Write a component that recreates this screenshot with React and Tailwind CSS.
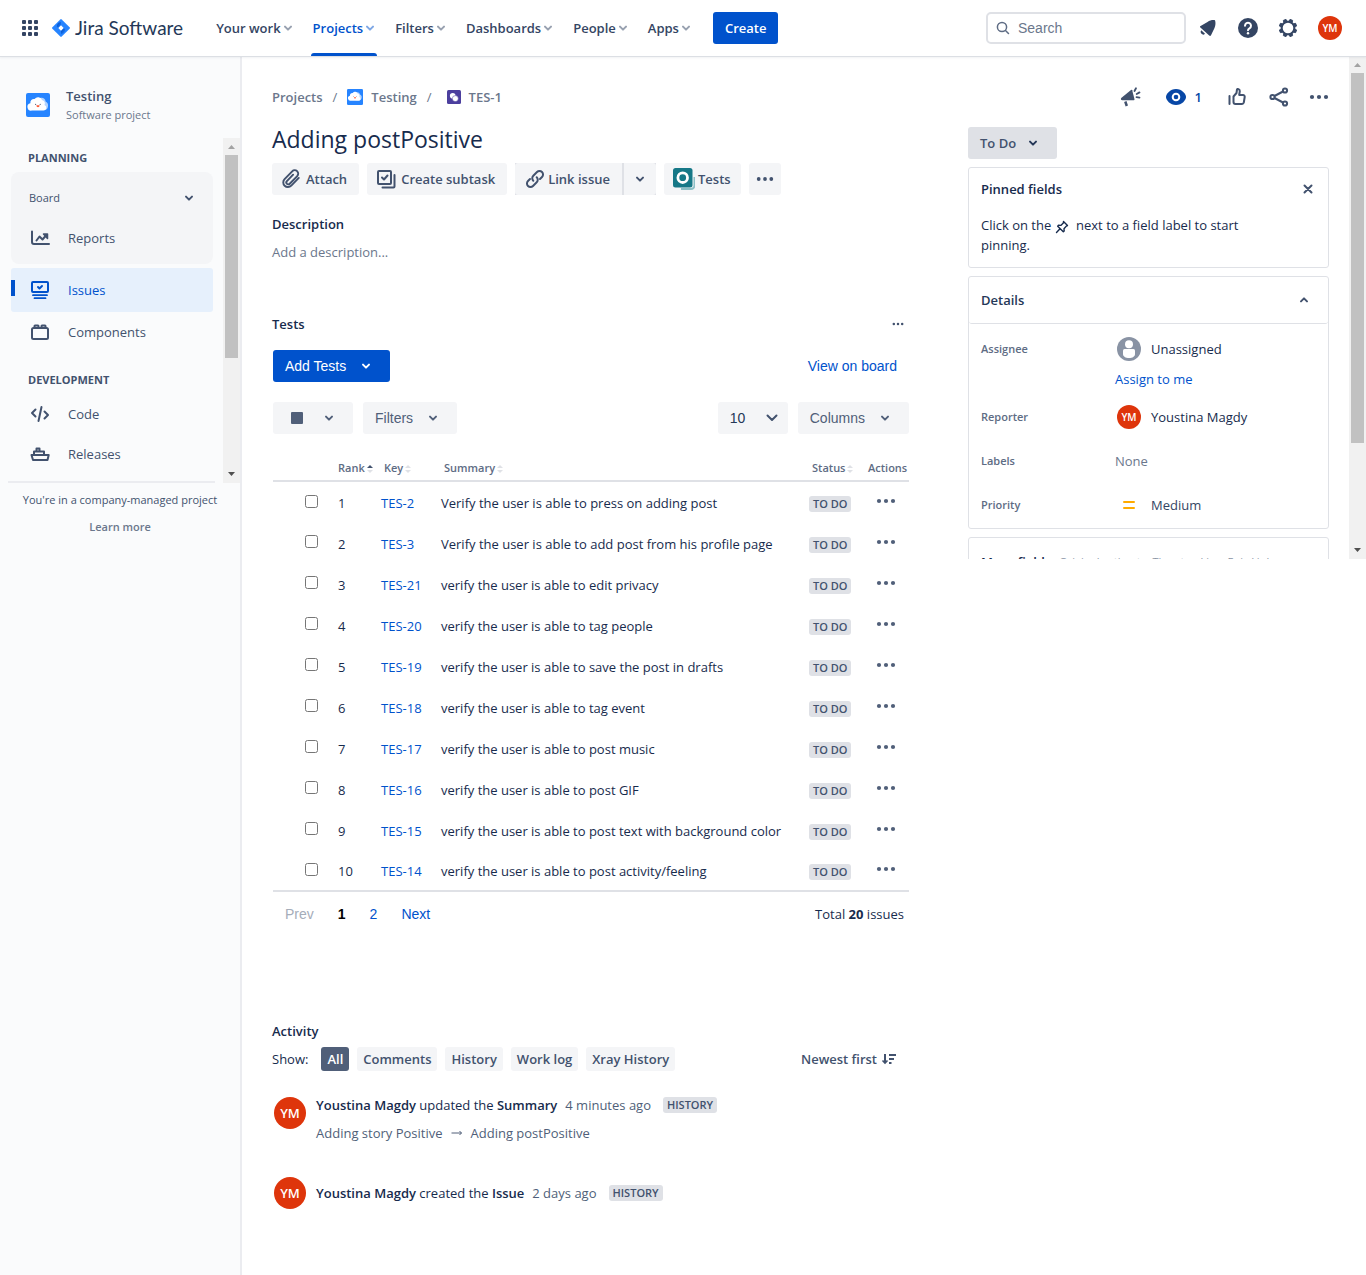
import React from "react";

const navItems = ["Your work", "Projects", "Filters", "Dashboards", "People", "Apps"];

const rows = [
  ["TES-2", "Verify the user is able to press on adding post"],
  ["TES-3", "Verify the user is able to add post from his profile page"],
  ["TES-21", "verify the user is able to edit privacy"],
  ["TES-20", "verify the user is able to tag people"],
  ["TES-19", "verify the user is able to save the post in drafts"],
  ["TES-18", "verify the user is able to tag event"],
  ["TES-17", "verify the user is able to post music"],
  ["TES-16", "verify the user is able to post GIF"],
  ["TES-15", "verify the user is able to post text with background color"],
  ["TES-14", "verify the user is able to post activity/feeling"],
];

function Chevron({ up = false, className = "" }) {
  return (
    <svg viewBox="0 0 10 10" className={`h-[10px] w-[10px] shrink-0 ${className}`} fill="none" stroke="currentColor" strokeWidth="2" strokeLinecap="round" strokeLinejoin="round" aria-hidden="true">
      <path d={up ? "M2 6.4 5 3.4l3 3" : "M2 3.6l3 3 3-3"} />
    </svg>
  );
}

function Dots({ className = "h-5 w-5" }) {
  return (
    <svg viewBox="0 0 20 20" className={className} fill="currentColor" aria-hidden="true">
      <circle cx="3" cy="10" r="2.1" />
      <circle cx="10" cy="10" r="2.1" />
      <circle cx="17" cy="10" r="2.1" />
    </svg>
  );
}

function CloudAvatar({ className }) {
  return (
    <svg viewBox="0 0 24 24" className={className} aria-hidden="true">
      <rect width="24" height="24" rx="2" fill="#2684FF" />
      <path d="M13 6.2c2-2.600 6.200-1.400 6.600 2.200 2.200 1.200 2.900 3.200 2.300 5.400A3.800 3.800 0 0 1 18 17h-5z" fill="#B3D4FF" />
      <path d="M6 17.600a3.600 3.600 0 0 1-1.600-7.300A3.600 3.600 0 0 1 8.600 6 4.300 4.300 0 0 1 16 6.900a3.600 3.600 0 0 1 2.500 5.100 2.900 2.900 0 0 1-1.200 5.600z" fill="#fff" />
      <circle cx="9.600" cy="11.400" r=".6" fill="#5E6C84" />
      <circle cx="14.200" cy="11.400" r=".6" fill="#5E6C84" />
      <path d="M10.400 12.200h3.200a1.600 2 0 0 1-3.200 0z" fill="#FF5630" />
    </svg>
  );
}

function Initials({ className }) {
  return (
    <span className={`flex shrink-0 items-center justify-center rounded-full bg-[#DE350B] font-semibold text-white ${className}`}>YM</span>
  );
}

function ScrollBar({ className, thumb }) {
  return (
    <div className={`flex w-[17px] shrink-0 flex-col items-center bg-[#F1F1F1] ${className}`} aria-hidden="true">
      <svg viewBox="0 0 17 17" className="h-[17px] w-[17px] shrink-0"><path d="M5 11l3.500-4 3.500 4z" fill="#A3A3A3" /></svg>
      <div className={`w-[13px] bg-[#C1C1C1] ${thumb}`} />
      <svg viewBox="0 0 17 17" className="mt-auto h-[17px] w-[17px] shrink-0"><path d="M5 6l3.500 4 3.500-4z" fill="#505050" /></svg>
    </div>
  );
}

function Header() {
  return (
    <header className="relative z-10 flex h-14 items-center bg-white pr-6 pl-[22px] shadow-[0_1px_0_#DCDFE4,0_2px_2px_rgba(9,30,66,0.06)]">
      <button aria-label="Switch to" className="text-[#344563]">
        <svg viewBox="0 0 16 16" className="h-4 w-4" fill="currentColor">
          {[0, 6, 12].map((y) => [0, 6, 12].map((x) => <rect key={`${x}-${y}`} x={x} y={y} width="4" height="4" rx="1" />))}
        </svg>
      </button>
      <a href="#home" className="ml-[14px] flex items-center gap-[5px]">
        <svg viewBox="0 0 18 18" className="h-[18px] w-[18px]" aria-hidden="true">
          <defs>
            <linearGradient id="jiraTop" x1="0" y1="0" x2="1" y2="1">
              <stop offset=".2" stopColor="#0052CC" />
              <stop offset="1" stopColor="#2684FF" />
            </linearGradient>
          </defs>
          <path d="M8.300.400a1 1 0 0 1 1.400 0l7.900 7.900a1 1 0 0 1 0 1.400l-7.900 7.900a1 1 0 0 1-1.400 0L.400 9.700a1 1 0 0 1 0-1.400z" fill="#2684FF" />
          <path d="M9 3v3.300L6.300 9 4.800 7.500A5 5 0 0 1 9 3z" fill="url(#jiraTop)" />
          <path d="M9 15v-3.300L11.700 9l1.500 1.500A5 5 0 0 1 9 15z" fill="url(#jiraTop)" />
          <path d="M9 6.300 11.700 9 9 11.700 6.300 9z" fill="#fff" />
        </svg>
        <span className="font-[Lato,sans-serif] text-[19px] leading-6 whitespace-nowrap text-[#253858]">Jira Software</span>
      </a>
      <nav className="ml-[31px] flex h-full items-stretch gap-4">
        {navItems.map((n) => (
          <button key={n} className={`relative flex items-center gap-[2px] px-[2px] text-[13px] font-semibold whitespace-nowrap ${n === "Projects" ? "text-[#0052CC]" : "text-[#344563]"}`}>
            {n}
            <Chevron className="opacity-50" />
            {n === "Projects" && <span className="absolute inset-x-0 bottom-0 h-[3px] rounded-t-sm bg-[#0052CC]" />}
          </button>
        ))}
      </nav>
      <button className="ml-5 h-8 rounded-[3px] bg-[#0052CC] px-3 text-[13px] font-semibold text-white">Create</button>
      <label className="ml-auto flex h-8 w-[200px] items-center gap-2 rounded-[5px] border-2 border-[#DFE1E6] pl-2">
        <svg viewBox="0 0 14 14" className="h-[14px] w-[14px] shrink-0" fill="none" stroke="#5E6C84" strokeWidth="1.500" strokeLinecap="round" aria-hidden="true">
          <circle cx="6" cy="6" r="4.600" /><path d="M9.500 9.500l3 3" />
        </svg>
        <input aria-label="Search" placeholder="Search" className="w-full min-w-0 bg-transparent font-['Liberation_Sans',sans-serif] text-sm outline-none placeholder:text-[#6B778C]" />
      </label>
      <div className="ml-[10px] flex items-center gap-4">
        <button aria-label="Notifications" className="text-[#344563]">
          <svg viewBox="0 0 24 24" className="h-6 w-6" fill="currentColor">
            <path d="M4.600 10 11.500 6C14 4.200 16.500 3.900 19 4.200c.8 2.300.6 5-.5 7.800L15 19.200c-.4.800-1.100.900-1.800.300L4.400 11.600c-.6-.6-.5-1.200.2-1.600z" />
            <path d="M5.300 14.300l3.700 3.400a2.300 2.300 0 0 1-3.700-3.400z" />
          </svg>
        </button>
        <button aria-label="Help" className="text-[#344563]">
          <svg viewBox="0 0 24 24" className="h-6 w-6">
            <circle cx="12" cy="12" r="10" fill="currentColor" />
            <path d="M9 9.800a3 3 0 1 1 4.500 2.600c-.9.500-1.500.9-1.500 1.900" fill="none" stroke="#fff" strokeWidth="2" strokeLinecap="round" />
            <circle cx="12" cy="17.300" r="1.200" fill="#fff" />
          </svg>
        </button>
        <button aria-label="Settings" className="text-[#344563]">
          <svg viewBox="0 0 24 24" className="h-6 w-6" fill="none" stroke="currentColor">
            <circle cx="12" cy="12" r="6.300" strokeWidth="2" />
            {[0, 45, 90, 135, 180, 225, 270, 315].map((a) => (
              <path key={a} d="M10.200 5.200l.4-2h2.800l.4 2z" fill="currentColor" strokeWidth=".8" strokeLinejoin="round" transform={`rotate(${a + 22.5} 12 12)`} />
            ))}
          </svg>
        </button>
        <button aria-label="Your profile" className="ml-[2px]"><Initials className="h-6 w-6 text-[10px]" /></button>
      </div>
    </header>
  );
}

function NavLink({ label, children, active = false }) {
  return (
    <a href={`#${label.toLowerCase()}`} className={`relative flex items-center pl-[17px] ${active ? "h-11 rounded-[3px] bg-[#E6F0FC] text-[#0052CC]" : "h-10 text-[#42526E]"}`}>
      {active && <span className="absolute top-3 left-0 h-4 w-1 bg-[#0052CC]" />}
      <svg viewBox="0 0 24 24" className="h-6 w-6 shrink-0" fill="none" stroke="currentColor" strokeWidth="2" strokeLinecap="round" strokeLinejoin="round" aria-hidden="true">{children}</svg>
      <span className="ml-4 text-[13px]">{label}</span>
    </a>
  );
}

function Sidebar() {
  return (
    <aside className="w-[242px] shrink-0 border-r-2 border-[#EBECF0] bg-[#FAFBFC]">
      <div className="flex h-[82px] items-center pt-4 pl-[26px]">
        <CloudAvatar className="h-6 w-6" />
        <div className="ml-4">
          <div className="text-[13px] leading-5 font-semibold text-[#42526E]">Testing</div>
          <div className="text-[11px] leading-[18px] text-[#6B778C]">Software project</div>
        </div>
      </div>
      <div className="flex h-[345px]">
        <nav className="min-w-0 flex-1 overflow-hidden pr-[10px] pl-[11px]">
          <h2 className="flex h-[34px] items-center pt-[6px] pl-[17px] text-[11px] font-bold text-[#42526E]">PLANNING</h2>
          <div className="h-[92px] rounded-lg bg-[#F4F5F7] pt-[6px]">
            <button className="flex h-10 w-full items-center justify-between pr-[19px] pl-[18px] text-[11px] text-[#42526E]">
              Board
              <Chevron />
            </button>
            <NavLink label="Reports">
              <path d="M4 5.500V16a2 2 0 0 0 2 2h15" />
              <path d="M8.500 14.500l3-4 3 3L18 9.500" />
              <path d="M15.500 8h4v4.500z" strokeWidth="1.500" fill="currentColor" />
            </NavLink>
          </div>
          <div className="h-1" />
          <NavLink label="Issues" active>
            <rect x="4" y="4" width="16" height="10" rx="1" />
            <path d="M10 9l1.500 1.500L14 8" />
            <path d="M5 17.200h14M6.500 20.200h11" strokeWidth="1.800" />
          </NavLink>
          <NavLink label="Components">
            <rect x="4" y="8" width="16" height="11" rx="1.500" />
            <path d="M6.500 7.500V6a.5.500 0 0 1 .5-.5h3a.5.500 0 0 1 .5.500v1.500M13.500 7.500V6a.5.500 0 0 1 .5-.5h3a.5.500 0 0 1 .5.500v1.500" />
          </NavLink>
          <h2 className="flex h-[42px] items-center pt-[14px] pl-[17px] text-[11px] font-bold text-[#42526E]">DEVELOPMENT</h2>
          <NavLink label="Code">
            <path d="M7.500 7.500 4 11l3.500 3.500M16.500 9.500 20 13l-3.500 3.500M13.500 5l-3 14" />
          </NavLink>
          <NavLink label="Releases">
            <path d="M3.500 13h17.200l-1.200 5H5z" />
            <path d="M6 12.500V9.500h10v3M8.500 9V6.500h3V9" />
          </NavLink>
        </nav>
        <ScrollBar thumb="h-[203px]" className="h-full" />
      </div>
      <div className="mr-[25px] ml-2 -mt-[2px] h-[2px] bg-[#EBECF0]" />
      <div className="text-center">
        <p className="mt-2 text-[11px] leading-[18px] whitespace-nowrap text-[#42526E]">You're in a company-managed project</p>
        <a href="#learn" className="mt-[9px] block text-[11px] leading-[18px] font-semibold text-[#6B778C]">Learn more</a>
      </div>
    </aside>
  );
}

function ActionButton({ children, className = "" }) {
  return <button className={`flex h-8 items-center rounded-[3px] bg-[#F4F5F7] text-[13px] font-semibold whitespace-nowrap text-[#42526E] ${className}`}>{children}</button>;
}

function ActionBar() {
  return (
    <div className="flex gap-2">
      <ActionButton className="gap-1 pr-3 pl-2">
        <svg viewBox="0 0 24 24" className="h-[22px] w-[22px]" fill="none" stroke="currentColor" strokeWidth="2.100" strokeLinecap="round" aria-hidden="true">
          <path d="M20.500 10.800l-8.200 8.400a5 5 0 0 1-7.300-7.100l8.300-8.500a3.700 3.700 0 0 1 5.500 5.200l-8.200 8.400a2.100 2.100 0 0 1-3.100-2.900l6.800-7" />
        </svg>
        Attach
      </ActionButton>
      <ActionButton className="gap-[5px] pr-3 pl-[9px]">
        <svg viewBox="0 0 20 20" className="h-5 w-5" fill="none" stroke="currentColor" strokeWidth="2" strokeLinecap="round" strokeLinejoin="round" aria-hidden="true">
          <rect x="2" y="2" width="13" height="13" rx="1" />
          <path d="M6 8.500l2 2 3.500-4M18.500 6v11.500a1 1 0 0 1-1 1H6.500" />
        </svg>
        Create subtask
      </ActionButton>
      <div className="flex gap-[2px] bg-[#DFE1E6]">
        <ActionButton className="gap-[3px] rounded-r-none pr-3 pl-[10px]">
          <svg viewBox="0 0 20 20" className="h-5 w-5" fill="none" stroke="currentColor" strokeWidth="2" strokeLinecap="round" aria-hidden="true">
            <path d="M8.300 11.700a3.500 3.500 0 0 1 0-5l3.700-3.700a3.500 3.500 0 0 1 5 5l-2 2M11.700 8.300a3.500 3.500 0 0 1 0 5L8 17a3.500 3.500 0 0 1-5-5l2-2" />
          </svg>
          Link issue
        </ActionButton>
        <ActionButton className="w-8 justify-center rounded-l-none"><Chevron /></ActionButton>
      </div>
      <ActionButton className="gap-[3px] pr-[10px] pl-[9px]">
        <svg viewBox="0 0 22 22" className="h-[22px] w-[22px]" aria-hidden="true">
          <path d="M8 21h10a3.500 3.500 0 0 0 3.500-3.500V9" fill="none" stroke="#8DBFC6" strokeWidth="2" />
          <rect width="19.500" height="19.500" rx="2.500" fill="#167887" />
          <circle cx="9.700" cy="9.700" r="4.800" fill="none" stroke="#fff" strokeWidth="2.800" />
        </svg>
        Tests
      </ActionButton>
      <ActionButton className="w-8 justify-center"><Dots className="h-[18px] w-[18px]" /></ActionButton>
    </div>
  );
}

function Sort({ active = false }) {
  return (
    <svg viewBox="0 0 6 10" className="ml-[2px] inline-block h-[10px] w-[6px]" aria-hidden="true">
      <path d="M0 4l3-3 3 3z" fill={active ? "#42526E" : "#DFE1E6"} />
      <path d="M0 6l3 3 3-3z" fill="#DFE1E6" />
    </svg>
  );
}

function Lozenge({ children }) {
  return <span className="inline-block rounded-[3px] bg-[#DFE1E6] px-1 text-[11px] leading-4 font-semibold whitespace-nowrap text-[#42526E]">{children}</span>;
}

function TestsPanel() {
  const tool = "flex h-8 items-center rounded-[3px] bg-[#F4F5F7] font-['Liberation_Sans',sans-serif] text-sm text-[#505F79]";
  return (
    <section>
      <div className="mt-[52px] flex h-5 items-center justify-between pr-[5px]">
        <h2 className="text-[13px] leading-5 font-semibold text-[#172B4D]">Tests</h2>
        <button aria-label="More" className="text-[#42526E]"><Dots className="h-3 w-3" /></button>
      </div>
      <div className="mt-4 ml-px flex items-center justify-between pr-3 font-['Liberation_Sans',sans-serif] text-sm">
        <button className="flex h-8 items-center gap-[15px] rounded-[3px] bg-[#0052CC] pr-[19px] pl-3 text-white">Add Tests <Chevron /></button>
        <a href="#board" className="text-[#0052CC]">View on board</a>
      </div>
      <div className="mt-5 ml-px flex items-center">
        <button aria-label="Bulk selection" className={`${tool} w-20 gap-[21px] pl-[18px]`}><span className="h-3 w-3 rounded-[1px] bg-[#505F79]" /><Chevron /></button>
        <button className={`${tool} ml-[10px] gap-[15px] pr-[19px] pl-3`}>Filters <Chevron /></button>
        <div className="relative ml-auto">
          <select aria-label="Rows per page" defaultValue="10" className={`${tool} w-[70px] appearance-none pl-3 text-[#253858]`}>
            <option>10</option>
            <option>25</option>
          </select>
          <svg viewBox="0 0 12 8" className="pointer-events-none absolute top-3 right-[10px] h-2 w-3" fill="none" stroke="#42526E" strokeWidth="2" strokeLinecap="round" strokeLinejoin="round" aria-hidden="true"><path d="M1.500 1.500 6 6l4.500-4.500" /></svg>
        </div>
        <button className={`${tool} ml-[10px] gap-[15px] pr-[19px] pl-3`}>Columns <Chevron /></button>
      </div>
      <table className="mt-[19px] ml-px w-[calc(100%-1px)] table-fixed border-collapse text-left text-[13px] leading-5 text-[#172B4D]">
        <colgroup>
          <col className="w-[65px]" />
          <col className="w-[43px]" />
          <col className="w-[60px]" />
          <col />
          <col className="w-[59px]" />
          <col className="w-[41px]" />
        </colgroup>
        <thead>
          <tr className="h-7 border-b-2 border-[#DFE1E6] text-[11px] whitespace-nowrap text-[#5E6C84]">
            <th aria-label="Select" />
            <th className="pt-[2px] font-semibold">Rank<Sort active /></th>
            <th className="pt-[2px] pl-[3px] font-semibold">Key<Sort /></th>
            <th className="pt-[2px] pl-[3px] font-semibold">Summary<Sort /></th>
            <th className="pt-[2px] pl-[3px] font-semibold">Status<Sort /></th>
            <th className="pt-[2px] font-semibold">Actions</th>
          </tr>
        </thead>
        <tbody className="border-b-2 border-[#DFE1E6]">
          {rows.map(([key, summary], i) => (
            <tr key={key} className="h-[41px]">
              <td className="pb-[2px] pl-8"><input type="checkbox" aria-label={`Select ${key}`} className="block h-[13px] w-[13px]" /></td>
              <td className="pt-[2px]">{i + 1}</td>
              <td className="pt-[2px]"><a href={`#${key}`} className="text-[#0052CC]">{key}</a></td>
              <td className="pt-[2px] whitespace-nowrap">{summary}</td>
              <td className="pt-[2px]"><Lozenge>TO DO</Lozenge></td>
              <td className="pb-[2px] pl-2"><button aria-label={`Actions for ${key}`} className="block text-[#505F79]"><Dots className="h-5 w-5" /></button></td>
            </tr>
          ))}
        </tbody>
      </table>
      <div className="mt-3 ml-px flex h-5 items-center justify-between pr-[5px] pl-3">
        <nav aria-label="Pages" className="flex font-['Liberation_Sans',sans-serif] text-sm text-[#0052CC]">
          <button disabled className="text-[#A5ADBA]">Prev</button>
          <button className="ml-6 font-bold text-black">1</button>
          <button className="ml-6">2</button>
          <button className="ml-6">Next</button>
        </nav>
        <p className="text-[13px] leading-5 text-[#172B4D]">Total <b>20</b> issues</p>
      </div>
    </section>
  );
}

function Activity() {
  return (
    <section className="mt-[97px] text-[13px] leading-5 text-[#172B4D]">
      <h2 className="font-semibold">Activity</h2>
      <div className="mt-[6px] flex h-6 items-center gap-2">
        <span className="mr-[5px]">Show:</span>
        {["All", "Comments", "History", "Work log", "Xray History"].map((t) => (
          <button key={t} className={`h-6 rounded-[3px] px-[6px] font-semibold whitespace-nowrap ${t === "All" ? "bg-[#505F79] text-white" : "bg-[#F4F5F7] text-[#42526E]"}`}>{t}</button>
        ))}
        <button className="mr-3 ml-auto flex items-center gap-1 font-semibold whitespace-nowrap text-[#42526E]">
          Newest first
          <svg viewBox="0 0 16 14" className="h-[14px] w-4" fill="none" stroke="currentColor" strokeWidth="2" aria-hidden="true">
            <path d="M4 2v9" /><path d="M1.500 8.500 4 11l2.500-2.500" strokeWidth="1.600" /><path d="M8 3h7M8 7h5M8 11h2.500" strokeWidth="1.800" />
          </svg>
        </button>
      </div>
      <div className="mt-6 flex pl-[2px]">
        <Initials className="mt-[2px] h-8 w-8 text-[13px]" />
        <div className="ml-[10px]">
          <p className="flex h-5 items-center whitespace-pre"><b className="font-semibold">Youstina Magdy</b> updated the <b className="font-semibold">Summary</b><span className="mr-3 ml-2 text-[#505F79]">4 minutes ago</span><Lozenge>HISTORY</Lozenge></p>
          <p className="mt-2 flex h-5 items-center text-[#505F79]">Adding story Positive
            <svg viewBox="0 0 12 8" className="mx-2 h-2 w-3" fill="none" stroke="currentColor" aria-hidden="true"><path d="M.5 4h10M8.500 2l2 2-2 2" /></svg>
            Adding postPositive</p>
        </div>
      </div>
      <div className="mt-[34px] flex items-center pl-[2px]">
        <Initials className="h-8 w-8 text-[13px]" />
        <p className="ml-[10px] flex h-5 items-center whitespace-pre"><b className="font-semibold">Youstina Magdy</b> created the <b className="font-semibold">Issue</b><span className="mr-3 ml-2 text-[#505F79]">2 days ago</span><Lozenge>HISTORY</Lozenge></p>
      </div>
    </section>
  );
}

function Field({ label, children, className }) {
  return (
    <div className={`flex items-center ${className}`}>
      <dt className="w-[134px] shrink-0 text-[11px] font-semibold text-[#5E6C84]">{label}</dt>
      <dd className="flex items-center">{children}</dd>
    </div>
  );
}

function Details() {
  const card = "rounded-[3px] border border-[#DFE1E6]";
  return (
    <div className="h-[503px] w-[361px] shrink-0 overflow-hidden text-[13px] leading-5 text-[#172B4D]">
      <div className="mt-[29px] flex h-6 items-center justify-end text-[#42526E]">
        <button aria-label="Give feedback">
          <svg viewBox="0 0 24 24" className="h-6 w-6" fill="none" stroke="currentColor" strokeWidth="1.800" strokeLinecap="round">
            <path d="M12 5c.5-.4 1-.3 1.200.3l2.300 9c.1.600-.2.900-.8.900H3.500c-1.700 0-2.200-1.500-1-2.500z" fill="currentColor" stroke="none" />
            <path d="M6.300 16.500l1.500 4.500" strokeWidth="2.500" strokeLinecap="butt" /><path d="M15.500 6l1.500-2.800M17.700 9l2.800-1.600M17.500 12.200l3 .4" />
          </svg>
        </button>
        <button className="ml-[22px] flex items-center gap-2 text-[13px] font-semibold text-[#0747A6]">
          <svg viewBox="0 0 22 18" className="h-[18px] w-[22px]" aria-hidden="true">
            <path d="M11 1C5 1 1 6 1 9s4 8 10 8 10-5 10-8-4-8-10-8z" fill="#0747A6" />
            <circle cx="11" cy="9" r="3.300" fill="none" stroke="#fff" strokeWidth="2" />
          </svg>
          1
        </button>
        <button aria-label="Like" className="ml-[25px]">
          <svg viewBox="0 0 20 20" className="h-5 w-5" fill="none" stroke="currentColor" strokeWidth="2" strokeLinejoin="round" strokeLinecap="round">
            <path d="M2.500 9v8" /><path d="M6.500 9.500 9.500 6l.5-3.500c.2-.9 2.800-.8 2.800 1.700L12.200 8H16a1.700 1.700 0 0 1 1.700 2l-.9 5.500A2 2 0 0 1 15 17H8.500a2 2 0 0 1-2-2z" />
          </svg>
        </button>
        <button aria-label="Share" className="ml-[22px]">
          <svg viewBox="0 0 20 20" className="h-5 w-5" fill="none" stroke="currentColor" strokeWidth="2">
            <circle cx="3.500" cy="10" r="2.100" /><circle cx="16" cy="3.500" r="2.100" /><circle cx="16" cy="16.500" r="2.100" /><path d="M5.500 9l8.500-4.500M5.500 11l8.500 4.500" />
          </svg>
        </button>
        <button aria-label="More actions" className="ml-5"><Dots /></button>
      </div>
      <button className="mt-[18px] flex h-8 w-[89px] items-center gap-3 rounded-[3px] bg-[#DFE1E6] pl-3 font-semibold whitespace-nowrap text-[#42526E]">To Do <Chevron className="text-[#253858]" /></button>
      <div className={`mt-2 h-[101px] px-3 pt-[11px] ${card}`}>
        <div className="flex h-5 items-center justify-between pr-[3px]">
          <h2 className="font-semibold">Pinned fields</h2>
          <button aria-label="Dismiss" className="text-[#42526E]"><svg viewBox="0 0 10 10" className="h-[10px] w-[10px]" stroke="currentColor" strokeWidth="2" strokeLinecap="round"><path d="M1.500 1.500l7 7M8.500 1.500l-7 7" /></svg></button>
        </div>
        <p className="mt-4 w-[290px] leading-5">
          Click on the{" "}
          <svg viewBox="0 0 14 14" className="mr-1 inline h-[14px] w-[14px]" fill="none" stroke="currentColor" strokeWidth="1.400" strokeLinejoin="round" strokeLinecap="round" aria-label="pin" role="img">
            <path d="M8.500 1.500l4 4-1.200.6-2.300 2.700.2 2.200-.9.800L2.700 6.200l.8-.9 2.300.1 2.500-2.300zM5 8.800 1.500 12.500" />
          </svg>{" "}
          next to a field label to start pinning.
        </p>
      </div>
      <div className={`mt-2 h-[253px] ${card}`}>
        <button className="flex h-[47px] w-full items-center justify-between rounded-[3px] border-b border-[#DFE1E6] pr-[19px] pl-3 font-semibold text-[#253858]">Details <Chevron up className="text-[#42526E]" /></button>
        <dl className="pt-[13px] pl-3">
          <Field label="Assignee" className="h-6">
            <svg viewBox="0 0 24 24" className="mr-[10px] ml-[2px] h-6 w-6" aria-hidden="true"><circle cx="12" cy="12" r="12" fill="#8993A4" /><circle cx="12" cy="7.300" r="4" fill="#fff" /><path d="M6 13.500a1.500 1.500 0 0 1 1.500-1.500h9a1.500 1.500 0 0 1 1.500 1.500V17c0 2.500-2.500 4-6 4s-6-1.500-6-4z" fill="#fff" /></svg>
            Unassigned
          </Field>
          <Field label="" className="mt-2 h-5"><a href="#assign" className="text-[#0052CC]">Assign to me</a></Field>
          <Field label="Reporter" className="mt-4 h-6"><Initials className="mr-[10px] ml-[2px] h-6 w-6 text-[10px]" />Youstina Magdy</Field>
          <Field label="Labels" className="mt-5 h-6"><span className="text-[#6B778C]">None</span></Field>
          <Field label="Priority" className="mt-5 h-6">
            <svg viewBox="0 0 24 24" className="mr-[10px] ml-[2px] h-6 w-6" stroke="#FFAB00" strokeWidth="2" strokeLinecap="round" aria-hidden="true"><path d="M7 9h10M7 15h10" /></svg>
            <span className="text-[#344563]">Medium</span>
          </Field>
        </dl>
      </div>
      <div className={`mt-2 flex h-[50px] items-center gap-2 pl-3 whitespace-nowrap ${card}`}>
        <span className="font-semibold">More fields</span>
        <span className="text-[11px] text-[#8993A4]">Original estimate, Time tracking, Epic Link, ...</span>
      </div>
    </div>
  );
}

export default function App() {
  return (
    <div className="flex min-h-screen flex-col bg-white font-['Open_Sans','Noto_Sans',sans-serif] leading-5">
      <Header />
      <div className="flex flex-1 items-stretch">
        <Sidebar />
        <main className="flex min-w-0 flex-1 gap-[59px] pr-5 pl-[30px]">
          <div className="min-w-0 flex-1">
            <nav aria-label="Breadcrumb" className="mt-[31px] flex h-5 items-center text-[13px] leading-5 font-semibold whitespace-nowrap text-[#6B778C]">
              <a href="#projects">Projects</a>
              <span className="mx-[10px] font-normal">/</span>
              <a href="#testing" className="flex items-center gap-2"><CloudAvatar className="h-4 w-4" />Testing</a>
              <span className="mr-[15px] ml-[10px] font-normal">/</span>
              <a href="#TES-1" className="flex items-center gap-2">
                <svg viewBox="0 0 14 14" className="h-[14px] w-[14px]" aria-hidden="true"><rect width="14" height="14" rx="1.500" fill="#4C3F9E" /><circle cx="5.700" cy="5.700" r="2.800" fill="#fff" /><circle cx="8.300" cy="8.600" r="3" fill="#fff" stroke="#4C3F9E" strokeWidth=".5" /></svg>
                TES-1
              </a>
            </nav>
            <h1 className="mt-4 mb-2 flex h-8 items-center text-[23px] leading-7 font-medium text-[#172B4D]">Adding postPositive</h1>
            <ActionBar />
            <h2 className="mt-[19px] text-[13px] leading-5 font-semibold text-[#172B4D]">Description</h2>
            <p className="mt-2 text-[13px] leading-5 text-[#6B778C]">Add a description...</p>
            <TestsPanel />
            <Activity />
          </div>
          <Details />
        </main>
        <ScrollBar className="h-[503px]" thumb="h-[370px]" />
      </div>
    </div>
  );
}
